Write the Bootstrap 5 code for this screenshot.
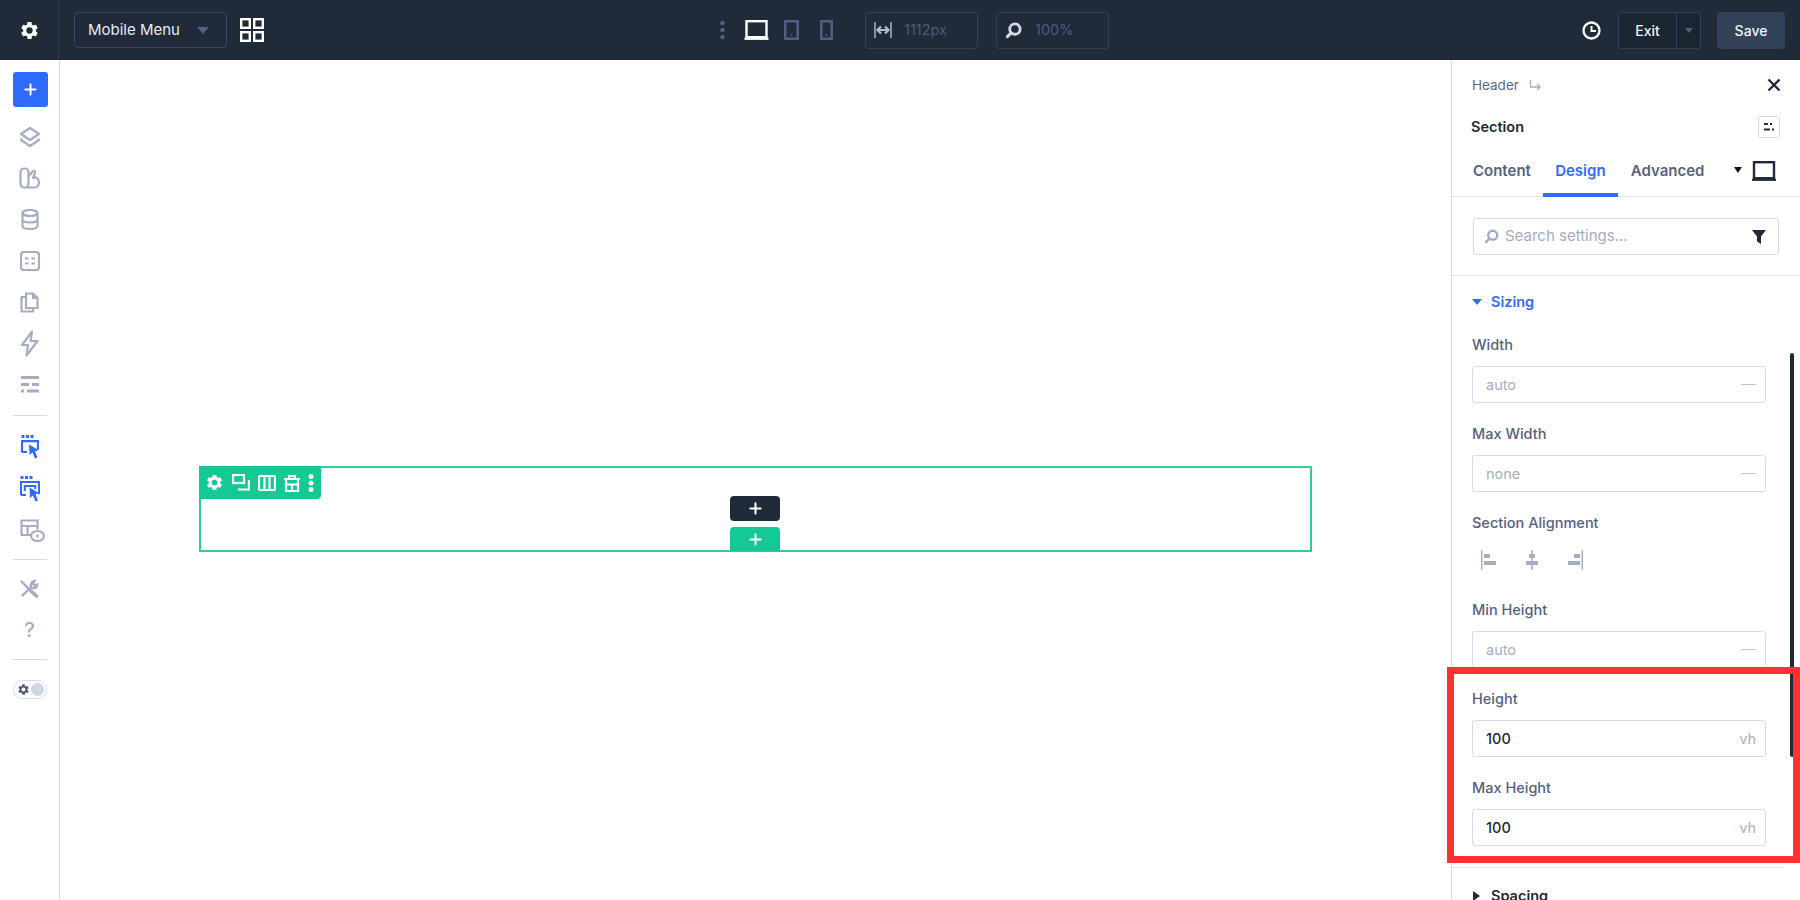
<!DOCTYPE html>
<html lang="en">
<head>
  <meta charset="UTF-8" />
  <meta name="viewport" content="width=device-width, initial-scale=1.0" />
  <title>Mobile Menu - Visual Builder</title>
  <link rel="stylesheet" href="https://cdn.jsdelivr.net/npm/bootstrap@5.3.2/dist/css/bootstrap.min.css">
  <style>
    html, body { height: 100%; margin: 0; overflow: hidden; background: #fff; }
    body { font-family: Inter, "Liberation Sans", sans-serif; font-size: 14px; color: #202a38; }
    svg { display: block; flex: none; }

    .top-bar { height: 60px; background: #202a38; color: #fff; }
    .top-gear { width: 59px; height: 60px; border-right: 1px solid #2e3a4c; }
    .menu-select { width: 153px; height: 36px; margin-left: 15px; padding: 0 13px; border: 1px solid #3b4760; border-radius: 4px; font-size: 15px; color: #e8ebf2; }
    .caret-down { width: 0; height: 0; border-left: 6px solid transparent; border-right: 6px solid transparent; border-top: 7px solid #525f85; }
    .grid-ico { margin-left: 13px; }
    .view-group { margin-left: 456px; }
    .dark-field { width: 113px; height: 37px; border: 1px solid #333f52; border-radius: 3px; color: #4c5a80; font-size: 14.5px; }
    .exit-group { height: 37px; border: 1px solid #333f52; border-radius: 3px; background: #1c2532; margin-left: 17px; font-weight: 500; }
    .exit-label { width: 58px; height: 35px; border-right: 1px solid #333f52; color: #f1f3f7; font-size: 14px; }
    .exit-more { width: 23px; height: 35px; }
    .exit-more .caret-down { border-left-width: 4px; border-right-width: 4px; border-top-width: 5px; }
    .btn.save-btn { width: 68px; height: 37px; margin: 0 15px 0 16px; padding: 0; background: #334258; border: 0; border-radius: 4px; color: #f1f3f7; font-size: 14px; font-weight: 500; }

    .work-area { height: 840px; }
    .side-rail { width: 60px; border-right: 1px solid #d6dae6; padding-top: 12px; }
    .add-btn { width: 35px; height: 35px; margin: 0 0 18.4px 13px; background: #2f6bff; border-radius: 3px; }
    .rail-ico { width: 59px; height: 41.3px; }
    .rail-line { width: 34px; height: 1px; margin: 9px 0 9px 13px; background: #d6dae6; }
    .rail-toggle { width: 34px; height: 19px; margin: 20px 0 0 13px; padding: 0 2px 0 3px; border: 1px solid #d6dae6; border-radius: 10px; }
    .rail-toggle-dot { width: 13px; height: 13px; border-radius: 50%; background: #d1d6e3; }

    .canvas-area { padding: 406px 0 0 139px; }
    .canvas-section { position: relative; width: 1113px; height: 86px; border: 2px solid #36c9a0; }
    .section-tools { position: absolute; left: -2px; top: -2px; width: 122px; height: 33px; padding-left: 6px; gap: 8px; background: #15c995; border-radius: 0 0 4px 0; }
    .plus-dark, .plus-green { position: absolute; left: 529px; width: 50px; border-radius: 4px; }
    .plus-dark { top: 28px; height: 25px; background: #202a38; }
    .plus-green { top: 59px; height: 24px; background: #15c995; border-radius: 4px 4px 0 0; }

    .settings-panel { position: relative; width: 349px; border-left: 1px solid #d6dae6; }
    .crumb-row { height: 20px; margin-top: 15px; padding: 0 19px 0 20px; color: #5b6784; font-size: 13.5px; }
    .title-row { height: 21px; margin-top: 21px; padding: 0 20px 0 19px; font-weight: 600; font-size: 14.5px; color: #202a38; }
    .preset-btn { width: 22px; height: 22px; border: 1px solid #d6dae6; border-radius: 3px; }
    .tab-row { height: 49px; margin-top: 11px; padding: 0 24px 0 21px; border-bottom: 1px solid #dfe2ea; }
    .tab-row .nav-link { height: 48px; padding: 12px 0 0; color: #56627f; font-size: 15px; font-weight: 600; text-align: center; }
    .tab-row .nav-link.active { width: 75px; margin: 0 13px -1px 12px; height: 49px; color: #2f6bff; border-bottom: 4px solid #2f6bff; }
    .caret-black { width: 0; height: 0; border-left: 4.5px solid transparent; border-right: 4.5px solid transparent; border-top: 6px solid #111; }
    .search-wrap { height: 79px; padding: 21px 21px 0 21px; border-bottom: 1px solid #dfe2ea; }
    .search-box { height: 37px; padding: 0 12px 0 10px; border: 1px solid #d6dae6; border-radius: 3px; color: #a3acc0; font-size: 15px; }
    .group-head { height: 20px; margin-top: 16px; padding-left: 20px; gap: 9px; font-weight: 600; font-size: 14.5px; color: #2f6bff; }
    .caret-blue { width: 0; height: 0; border-left: 5px solid transparent; border-right: 5px solid transparent; border-top: 6px solid #2f6bff; }
    .caret-right { width: 0; height: 0; margin: 0 2px 0 1px; border-top: 5px solid transparent; border-bottom: 5px solid transparent; border-left: 7px solid #202a38; }
    .setting-list { padding: 23px 0 0 20px; }
    .setting-label { height: 20px; line-height: 20px; font-weight: 500; color: #55617f; font-size: 14.5px; }
    .form-control.setting-input { width: 294px; height: 37px; margin: 11px 0 21px 0; padding: 0 9px 0 13px; border: 1px solid #d6dae6; border-radius: 3px; color: #a5aec2; font-size: 14.5px; }
    .form-control.setting-input.is-set { color: #202a38; font-weight: 500; }
    .unit-text { color: #a5aec2; font-weight: 400; font-size: 14.5px; }
    .dash-mark { width: 15px; height: 1.5px; background: #bcc3d3; }
    .align-row { height: 20px; margin: 17px 0 30px 9px; gap: 30px; }
    .group-line { width: 332px; height: 1px; margin-left: -20px; background: #dfe2ea; }
    .group-head.is-closed { margin-top: 18px; color: #202a38; }

    .panel-scroll { position: absolute; right: 6px; top: 293px; width: 4px; height: 404px; background: #202a38; border-radius: 2px; }
    .note-box { position: absolute; left: -5px; top: 607px; width: 353px; height: 196px; border: 7px solid #ff3131; pointer-events: none; }
  </style>
</head>
<body>
  <svg width="0" height="0" class="position-absolute">
    <symbol id="gear" viewBox="0 0 24 24"><path fill="currentColor" d="M19.14 12.94c.04-.3.06-.61.06-.94 0-.32-.02-.64-.07-.94l2.03-1.58a.49.49 0 0 0 .12-.61l-1.92-3.32a.488.488 0 0 0-.59-.22l-2.39.96c-.5-.38-1.03-.7-1.62-.94l-.36-2.54a.484.484 0 0 0-.48-.41h-3.84c-.24 0-.43.17-.47.41l-.36 2.54c-.59.24-1.13.57-1.62.94l-2.39-.96c-.22-.08-.47 0-.59.22L2.74 8.87c-.12.21-.08.47.12.61l2.03 1.58c-.05.3-.09.63-.09.94s.02.64.07.94l-2.03 1.58a.49.49 0 0 0-.12.61l1.92 3.32c.12.22.37.29.59.22l2.39-.96c.5.38 1.03.7 1.62.94l.36 2.54c.05.24.24.41.48.41h3.84c.24 0 .44-.17.47-.41l.36-2.54c.59-.24 1.13-.56 1.62-.94l2.39.96c.22.08.47 0 .59-.22l1.92-3.32c.12-.22.07-.47-.12-.61l-2.01-1.58zM12 15.6A3.6 3.6 0 1 1 12 8.4a3.6 3.6 0 0 1 0 7.2z"/></symbol>
    <symbol id="plus" viewBox="0 0 14 14"><path d="M7 1.5v11M1.5 7h11" stroke="currentColor" stroke-width="2.2" stroke-linecap="round" fill="none"/></symbol>
    <symbol id="mag" viewBox="0 0 18 18"><circle cx="10.500" cy="7.500" r="5.500" fill="none" stroke="currentColor" stroke-width="3"/><path d="M6.500 11.500L2.500 15.500" stroke="currentColor" stroke-width="3.200" stroke-linecap="round"/></symbol>
    <symbol id="monitor" viewBox="0 0 24 20"><rect x="2" y="1.200" width="20" height="16" fill="none" stroke="currentColor" stroke-width="2.400"/><path d="M0 18.800h24" stroke="currentColor" stroke-width="2.200"/></symbol>
  </svg>

  <div class="top-bar d-flex align-items-center">
    <div class="top-gear d-flex align-items-center justify-content-center"><svg width="21" height="21"><use href="#gear"/></svg></div>
    <div class="menu-select d-flex align-items-center justify-content-between"><span>Mobile Menu</span><span class="caret-down me-1"></span></div>
    <svg class="grid-ico" width="24" height="24" viewBox="0 0 24 24" fill="none" stroke="#fff" stroke-width="2.4"><rect x="1.2" y="1.2" width="8.6" height="8.6"/><rect x="14.2" y="1.2" width="8.6" height="8.6"/><rect x="1.2" y="14.2" width="8.6" height="8.6"/><rect x="14.2" y="14.2" width="8.6" height="8.6"/></svg>

    <div class="view-group d-flex align-items-center">
      <svg width="5" height="20" viewBox="0 0 5 20" fill="#525f85"><circle cx="2.5" cy="3" r="2.3"/><circle cx="2.5" cy="10" r="2.3"/><circle cx="2.5" cy="17" r="2.3"/></svg>
      <svg style="margin-left:19px;color:#fff" width="25" height="20"><use href="#monitor"/></svg>
      <svg style="margin-left:15px" width="15" height="20" viewBox="0 0 15 20" fill="none" stroke="#525f85" stroke-width="2.500"><rect x="1.300" y="1.300" width="12.400" height="17.400"/><circle cx="7.500" cy="15" r="1" fill="#525f85" stroke="none"/></svg>
      <svg style="margin-left:21px" width="13" height="20" viewBox="0 0 13 20" fill="none" stroke="#525f85" stroke-width="2.500"><rect x="1.300" y="1.300" width="10.400" height="17.400"/><circle cx="6.500" cy="15" r="1" fill="#525f85" stroke="none"/></svg>
      <div class="dark-field d-flex align-items-center" style="margin-left:32px">
        <svg class="ms-2" width="18" height="16" viewBox="0 0 18 16" fill="none" stroke="#b4bdd0"><path d="M1 0v16M17 0v16" stroke-width="1.400"/><path d="M3.500 8h11M7 4.500L3.500 8 7 11.500M11 4.500L14.500 8 11 11.500" stroke-width="2.200"/></svg>
        <span style="margin-left:12px">1112px</span>
      </div>
      <div class="dark-field d-flex align-items-center" style="margin-left:18px">
        <svg style="margin-left:8px;color:#d3d8e3" width="17" height="17"><use href="#mag"/></svg>
        <span style="margin-left:13px">100%</span>
      </div>
    </div>

    <div class="ms-auto d-flex align-items-center">
      <svg width="19" height="19" viewBox="0 0 19 19" fill="none" stroke="#fff" stroke-width="2.300"><circle cx="9.500" cy="9.500" r="8"/><path d="M9.500 5v5h4.500" stroke-width="2"/></svg>
      <div class="exit-group d-flex align-items-center">
        <div class="exit-label d-flex align-items-center justify-content-center">Exit</div>
        <div class="exit-more d-flex align-items-center justify-content-center"><span class="caret-down"></span></div>
      </div>
      <button class="btn save-btn">Save</button>
    </div>
  </div>

  <div class="work-area d-flex">
    <div class="side-rail flex-shrink-0" style="color:#a5adc2">
      <div class="add-btn d-flex align-items-center justify-content-center text-white"><svg width="13" height="13"><use href="#plus"/></svg></div>
      <div class="rail-ico d-flex align-items-center justify-content-center" style="margin-top:-9px"><svg width="22" height="22" viewBox="0 0 22 22" fill="none" stroke="currentColor" stroke-width="2.200" stroke-linejoin="round"><path d="M11 2l9 6-9 6-9-6z"/><path d="M3 12.500l-1 1.500 9 6 9-6-1-1.500"/></svg></div>
      <div class="rail-ico d-flex align-items-center justify-content-center"><svg width="22" height="22" viewBox="0 0 22 22" fill="none" stroke="currentColor" stroke-width="2.200" stroke-linejoin="round"><rect x="1.500" y="1.500" width="8" height="19" rx="3.500"/><path d="M9.500 9.500l4-5c1.500-1.500 3-.5 2.500 1.500l-2 5c3-1.500 6 .5 6 4.500 0 3-2.500 5-5 5H7"/></svg></div>
      <div class="rail-ico d-flex align-items-center justify-content-center"><svg width="18" height="21" viewBox="0 0 18 21" fill="none" stroke="currentColor" stroke-width="2.200"><ellipse cx="9" cy="4" rx="7.500" ry="3"/><path d="M1.500 4v13c0 1.800 3.300 3 7.500 3s7.500-1.200 7.500-3V4M1.500 10.500c0 1.800 3.300 3 7.500 3s7.500-1.200 7.500-3"/></svg></div>
      <div class="rail-ico d-flex align-items-center justify-content-center"><svg width="20" height="20" viewBox="0 0 20 20" fill="none" stroke="currentColor" stroke-width="2.200"><rect x="1" y="1" width="18" height="18" rx="3"/><path d="M5 7.500h3.500M11.500 7.500H15M5 12.500h3.500M11.500 12.500H15" stroke-width="1.800"/></svg></div>
      <div class="rail-ico d-flex align-items-center justify-content-center"><svg width="19" height="21" viewBox="0 0 19 21" fill="none" stroke="currentColor" stroke-width="2.200"><path d="M6 16V1.500h7l4.500 4.500v10z"/><path d="M13 1.500V6h4.500"/><path d="M6 5H1.500v14.500H13V16"/></svg></div>
      <div class="rail-ico d-flex align-items-center justify-content-center"><svg width="19" height="27" viewBox="0 0 19 27" fill="none" stroke="currentColor" stroke-width="2.200" stroke-linejoin="round"><path d="M12 1.500L2 15h6l-1.500 10.500L17.500 11h-7z"/></svg></div>
      <div class="rail-ico d-flex align-items-center justify-content-center"><svg width="18" height="17" viewBox="0 0 18 17" fill="currentColor"><rect y="0" width="18" height="3"/><rect y="7" width="8" height="3"/><rect x="11" y="7" width="7" height="3"/><rect y="13.500" width="3" height="3"/><rect x="6" y="13.500" width="12" height="3"/></svg></div>
      <div class="rail-line" style="margin-top:10px;margin-bottom:10.600px"></div>
      <div class="rail-ico d-flex align-items-center justify-content-center" style="color:#2f6bff"><svg width="18" height="25" viewBox="0 0 18 25" fill="none" stroke="currentColor"><g fill="currentColor" stroke="none"><rect x=".500" y="0" width="3" height="3"/><rect x="5" y="0" width="3" height="3"/><rect x="9.500" y="0" width="3" height="3"/></g><path d="M1 17V6.200h16v8.500M1 17h5" stroke-width="2.200"/><path d="M8 9.500l9.500 5.500-3.500 1.500 2.500 6-2.500 1-2.500-6-3 2.500z" fill="currentColor" stroke="none"/></svg></div>
      <div class="rail-ico d-flex align-items-center justify-content-center" style="color:#2f6bff"><svg width="20" height="27" viewBox="0 0 20 27" fill="none" stroke="currentColor"><g fill="currentColor" stroke="none"><rect x=".500" y="0" width="3" height="3"/><rect x="5" y="0" width="3" height="3"/><rect x="9.500" y="0" width="3" height="3"/></g><path d="M1 19V6h18v12M1 19h5" stroke-width="2"/><path d="M4.800 15V10h10.500v3" stroke-width="2"/><path d="M9.500 11.500l9.500 5.500-3.500 1.500 2.500 6-2.500 1-2.500-6-3 2.500z" fill="currentColor" stroke="none"/></svg></div>
      <div class="rail-ico d-flex align-items-center justify-content-center" style="padding-left:5px;padding-top:1px"><svg width="25" height="24" viewBox="0 0 25 24" fill="none" stroke="currentColor" stroke-width="2.200"><path d="M12 16H1.500V1.500h16v9M1.500 7h16M7.500 7v9"/><ellipse cx="17.500" cy="17" rx="6.500" ry="5"/><circle cx="17.500" cy="17" r="1.400" fill="currentColor" stroke="none"/></svg></div>
      <div class="rail-line" style="margin-top:8px"></div>
      <div class="rail-ico d-flex align-items-center justify-content-center" style="margin-top:5px;height:40px"><svg width="19" height="19" viewBox="0 0 19 19" fill="none" stroke="currentColor" stroke-width="2.400" stroke-linecap="round"><path d="M1.500 2.500L10 11"/><path d="M11 12l5.500 5" stroke-width="3.600"/><path d="M2.500 16.500L11 8"/><path d="M11 8c-1-2.500.5-5.500 3.500-6L13 4.500l1.500 2 2.800-.8c0 2.500-3 4.200-5.300 3"/></svg></div>
      <div class="rail-ico d-flex align-items-center justify-content-center" style="height:42px;font-size:20px;font-weight:500">?</div>
      <div class="rail-line" style="margin-top:8px;margin-bottom:0"></div>
      <div class="rail-toggle d-flex align-items-center justify-content-between"><svg width="13" height="13" style="color:#4e5b80"><use href="#gear"/></svg><span class="rail-toggle-dot"></span></div>
    </div>

    <div class="canvas-area flex-grow-1">
      <div class="canvas-section">
        <div class="section-tools d-flex align-items-center text-white">
          <svg width="19" height="19"><use href="#gear"/></svg>
          <svg width="18" height="17" viewBox="0 0 18 17" fill="none" stroke="currentColor" stroke-width="2.200"><rect x="1" y="1" width="11" height="8"/><path d="M17 6v9.500H6"/></svg>
          <svg width="18" height="16" viewBox="0 0 18 16" fill="none" stroke="currentColor" stroke-width="2.200"><rect x="1" y="1" width="16" height="14" rx="1"/><path d="M6.500 1v14M11.500 1v14"/></svg>
          <svg width="16" height="18" viewBox="0 0 16 18" fill="none" stroke="currentColor" stroke-width="2.200"><path d="M0 5h16M5 5V2h6v3M2 5.500V17h12V5.500M2 10.500h12M8 10.500V17"/></svg>
          <svg width="6" height="18" viewBox="0 0 6 18" fill="currentColor"><circle cx="3" cy="2.500" r="2.500"/><circle cx="3" cy="9" r="2.500"/><circle cx="3" cy="15.500" r="2.500"/></svg>
        </div>
        <div class="plus-dark d-flex align-items-center justify-content-center text-white"><svg width="13" height="13"><use href="#plus"/></svg></div>
        <div class="plus-green d-flex align-items-center justify-content-center text-white"><svg width="13" height="13"><use href="#plus"/></svg></div>
      </div>
    </div>

    <div class="settings-panel flex-shrink-0">
      <div class="crumb-row d-flex align-items-center">
        <span>Header</span>
        <svg style="margin-left:10px" width="12" height="11" viewBox="0 0 12 11" fill="none" stroke="#a5adc2" stroke-width="1.300"><path d="M1.500 0v7h9M8 4l3 3-3 3"/></svg>
        <svg class="ms-auto" width="14" height="14" viewBox="0 0 14 14" stroke="#202a38" stroke-width="2.400"><path d="M1.500 1.500l11 11M12.500 1.500l-11 11"/></svg>
      </div>
      <div class="title-row d-flex align-items-center justify-content-between">
        <span>Section</span>
        <div class="preset-btn d-flex align-items-center justify-content-center"><svg width="12" height="10" viewBox="0 0 12 10" fill="#202a38"><rect x="1" y="1" width="4" height="2"/><rect x="7" y="1" width="2" height="2"/><rect x="1" y="6.500" width="6" height="2"/><rect x="9" y="6.500" width="2" height="2"/></svg></div>
      </div>
      <div class="tab-row d-flex align-items-start">
        <ul class="nav">
          <li class="nav-item"><a class="nav-link" href="#">Content</a></li>
          <li class="nav-item"><a class="nav-link active" href="#">Design</a></li>
          <li class="nav-item"><a class="nav-link" href="#">Advanced</a></li>
        </ul>
        <div class="ms-auto d-flex align-items-center" style="margin-top:13px;gap:10px">
          <span class="caret-black" style="margin-top:-3px"></span>
          <svg width="24" height="20" style="color:#202a38"><use href="#monitor"/></svg>
        </div>
      </div>
      <div class="search-wrap">
        <div class="search-box d-flex align-items-center">
          <svg width="15" height="15" style="color:#a5adc2"><use href="#mag"/></svg>
          <span style="margin-left:6px">Search settings...</span>
          <svg class="ms-auto" width="14" height="15" viewBox="0 0 14 15" fill="#202a38"><path d="M0 1h14L9 7.500V15L5 12.500V7.500z"/></svg>
        </div>
      </div>
      <div class="group-head d-flex align-items-center"><span class="caret-blue"></span>Sizing</div>

      <div class="setting-list">
        <div class="setting-label">Width</div>
        <div class="form-control setting-input d-flex align-items-center justify-content-between"><span>auto</span><span class="dash-mark"></span></div>
        <div class="setting-label">Max Width</div>
        <div class="form-control setting-input d-flex align-items-center justify-content-between"><span>none</span><span class="dash-mark"></span></div>
        <div class="setting-label">Section Alignment</div>
        <div class="align-row d-flex align-items-center" style="color:#a5adc2">
          <svg width="15" height="20" viewBox="0 0 15 20" fill="currentColor"><rect x="0" y="0" width="1.500" height="20"/><rect x="3" y="4" width="6" height="4"/><rect x="3" y="11" width="12" height="4"/></svg>
          <svg width="12" height="20" viewBox="0 0 12 20" fill="currentColor"><rect x="5.300" y="0" width="1.500" height="20"/><rect x="3" y="4" width="6" height="4"/><rect x="0" y="11" width="12" height="4"/></svg>
          <svg width="15" height="20" viewBox="0 0 15 20" fill="currentColor"><rect x="13.500" y="0" width="1.500" height="20"/><rect x="6" y="4" width="6" height="4"/><rect x="0" y="11" width="12" height="4"/></svg>
        </div>
        <div class="setting-label">Min Height</div>
        <div class="form-control setting-input d-flex align-items-center justify-content-between"><span>auto</span><span class="dash-mark"></span></div>
        <div class="setting-label">Height</div>
        <div class="form-control setting-input is-set d-flex align-items-center justify-content-between"><span>100</span><span class="unit-text">vh</span></div>
        <div class="setting-label">Max Height</div>
        <div class="form-control setting-input is-set d-flex align-items-center justify-content-between"><span>100</span><span class="unit-text">vh</span></div>
        <div class="group-line"></div>
      </div>
      <div class="group-head is-closed d-flex align-items-center"><span class="caret-right"></span>Spacing</div>

      <div class="panel-scroll"></div>
      <div class="note-box"></div>
    </div>
  </div>

  <script src="https://cdn.jsdelivr.net/npm/bootstrap@5.3.2/dist/js/bootstrap.bundle.min.js"></script>
</body>
</html>
